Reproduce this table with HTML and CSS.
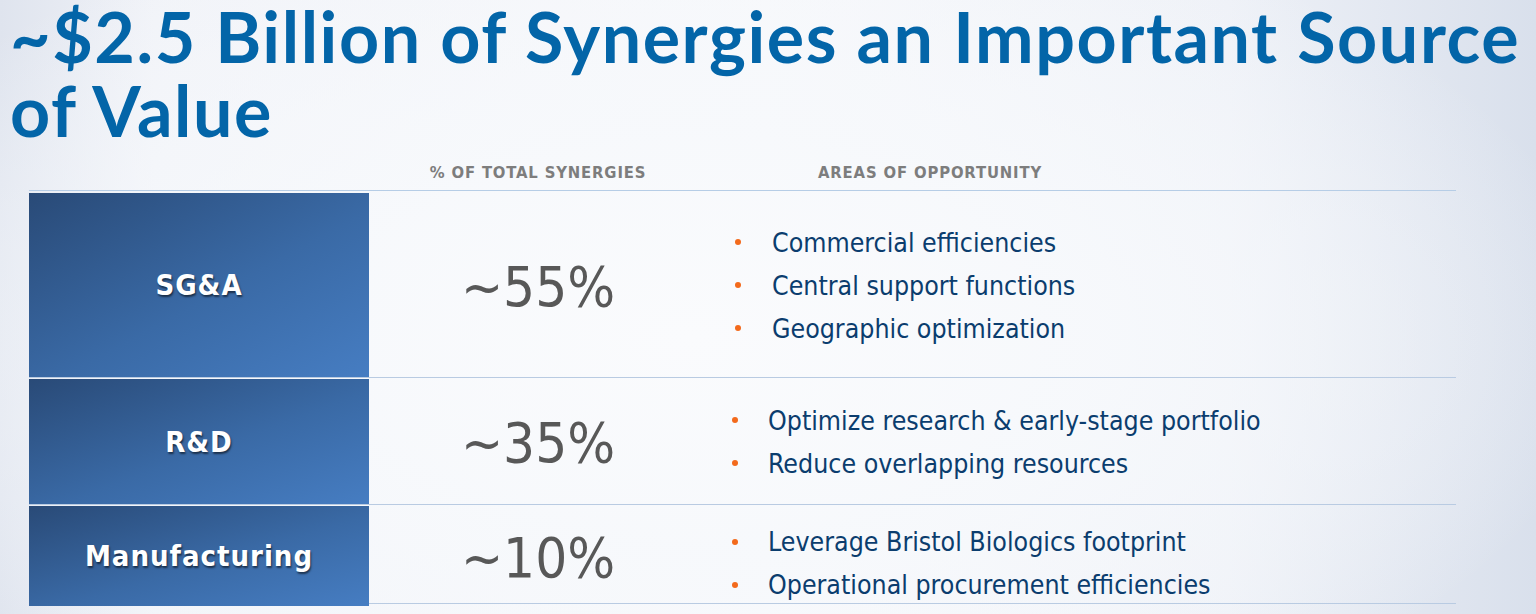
FILE: index.html
```html
<!DOCTYPE html>
<html lang="en">
<head>
<meta charset="utf-8">
<title>Synergies</title>
<link rel="stylesheet" href="styles.css">
</head>
<body>
<div class="slide">
  <h1 class="title">~$2.5 Billion of Synergies an Important Source<br>of Value</h1>
  <div class="heads">
    <div class="head-spacer"></div>
    <div class="head head-pct">% OF TOTAL SYNERGIES</div>
    <div class="head head-areas">AREAS OF OPPORTUNITY</div>
  </div>
  <div class="table">
    <div class="row row-1">
      <div class="label">SG&amp;A</div>
      <div class="pct">~55%</div>
      <ul class="areas areas-wide">
        <li>Commercial efficiencies</li>
        <li>Central support functions</li>
        <li>Geographic optimization</li>
      </ul>
    </div>
    <div class="row row-2">
      <div class="label">R&amp;D</div>
      <div class="pct">~35%</div>
      <ul class="areas">
        <li>Optimize research &amp; early-stage portfolio</li>
        <li>Reduce overlapping resources</li>
      </ul>
    </div>
    <div class="row row-3">
      <div class="label">Manufacturing</div>
      <div class="pct">~10%</div>
      <ul class="areas areas-low">
        <li>Leverage Bristol Biologics footprint</li>
        <li>Operational procurement efficiencies</li>
      </ul>
    </div>
  </div>
</div>
</body>
</html>
```
FILE: styles.css
```css
html, body {
  margin: 0;
  padding: 0;
}
body {
  width: 1536px;
  height: 614px;
  overflow: hidden;
  background: #eef1f7;
}
.slide {
  width: 1536px;
  height: 614px;
  box-sizing: border-box;
  overflow: hidden;
  background:
    radial-gradient(ellipse 60% 75% at 45% 55%, rgba(250,251,253,1) 0%, rgba(247,249,252,0.9) 45%, rgba(247,249,252,0) 100%),
    linear-gradient(90deg, #dfe4ee 0%, #f1f3f8 10%, #f7f8fb 50%, #eef1f7 80%, #d9e0ec 100%);
  font-family: "DejaVu Sans Condensed", "DejaVu Sans", sans-serif;
  font-stretch: condensed;
}
.title {
  margin: -1px 0 0 0;
  padding: 0 0 0 10px;
  font-family: "Lato", "DejaVu Sans", sans-serif;
  font-stretch: normal;
  font-weight: 700;
  font-size: 70px;
  line-height: 74px;
  color: #0365a8;
  letter-spacing: 1.55px;
  height: 148px;
  white-space: nowrap;
}
.heads {
  display: grid;
  grid-template-columns: 369px 338px 1fr;
  height: 43px;
  box-sizing: border-box;
  padding-top: 7px;
  align-items: center;
}
.head {
  font-size: 16.5px;
  font-weight: 700;
  color: #7d7d7d;
  letter-spacing: 0.85px;
}
.head-pct {
  text-align: center;
}
.head-areas {
  padding-left: 111px;
}
.table {
  margin-left: 29px;
  width: 1427px;
  border-top: 1px solid #b6cde6;
}
.row {
  display: grid;
  grid-template-columns: 340px 338px 1fr;
  border-bottom: 1px solid #b9cbe2;
  padding-top: 1px;
}
.row-1 { padding-top: 2px; height: 184px; }
.row-2 { height: 125px; }
.row-3 { height: 97px; }
.label {
  display: flex;
  align-items: center;
  justify-content: center;
  background: linear-gradient(to bottom right, #294a77 0%, #3a6aa6 55%, #467dc2 100%);
  color: #ffffff;
  font-weight: 700;
  font-size: 29px;
  letter-spacing: 1px;
  text-shadow: 1px 2px 2px rgba(0,0,0,0.55);
}
.pct {
  display: flex;
  align-items: center;
  justify-content: center;
  font-size: 56px;
  color: #585858;
  padding-top: 2px;
}
.areas {
  list-style: none;
  margin: 0;
  padding: 0;
  display: flex;
  flex-direction: column;
  justify-content: center;
  font-size: 26.5px;
  line-height: 43px;
  color: #0b3d6e;
}
.areas-low { padding-top: 14px; }
.areas li {
  display: flex;
  align-items: center;
}
.areas li::before {
  content: "";
  width: 6px;
  height: 6px;
  border-radius: 50%;
  background: #f36a1c;
  margin-left: 25px;
  margin-right: 30px;
  flex: none;
}
.areas-wide li::before {
  margin-left: 28px;
  margin-right: 31px;
}
```
